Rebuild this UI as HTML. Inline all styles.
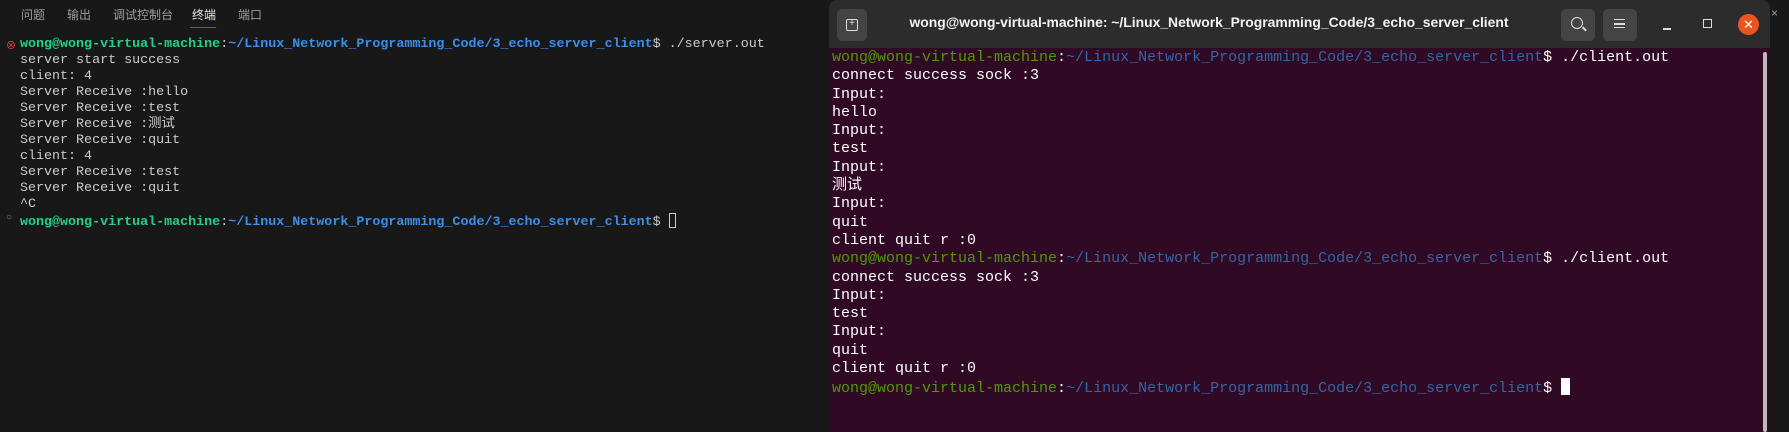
<!DOCTYPE html>
<html><head><meta charset="utf-8"><style>
*{margin:0;padding:0;box-sizing:border-box}
body{width:1789px;height:432px;background:#181818;position:relative;overflow:hidden;font-family:"Liberation Mono","Noto Sans CJK SC",monospace}
.tab{position:absolute;top:6px;font:12px "Liberation Sans","Noto Sans CJK SC",sans-serif;color:#9d9d9d}
.l{position:absolute;left:20px;font-size:13.35px;line-height:16px;color:#cccccc;white-space:pre}
.g{color:#23d18b;font-weight:bold}.b{color:#3b8eea;font-weight:bold}
.r{position:absolute;left:832px;font-size:15px;line-height:18.3px;color:#ffffff;white-space:pre}
.rg{color:#4e9a06}.rb{color:#3465a4}
.btn{position:absolute;top:9px;width:34px;height:32px;background:#444;border-radius:5px}
</style></head><body>
<div class="tab" style="left:21px">问题</div>
<div class="tab" style="left:67px">输出</div>
<div class="tab" style="left:113px">调试控制台</div>
<div class="tab" style="left:192px;color:#e7e7e7">终端</div>
<div style="position:absolute;left:190px;top:27px;width:26px;height:1px;background:#0078d4"></div>
<div class="tab" style="left:238px">端口</div>
<div style="position:absolute;left:6px;top:37px;color:#f14c4c;font-size:10px">⊗</div>
<div style="position:absolute;left:6px;top:213px;color:#888;font-size:10px">○</div>
<div class="l" style="top:37px"><span class="g">wong@wong-virtual-machine</span>:<span class="b">~/Linux_Network_Programming_Code/3_echo_server_client</span>$ ./server.out
server start success
client: 4
Server Receive :hello
Server Receive :test
Server Receive :测试
Server Receive :quit
client: 4
Server Receive :test
Server Receive :quit
^C
<span class="g">wong@wong-virtual-machine</span>:<span class="b">~/Linux_Network_Programming_Code/3_echo_server_client</span>$ <span style="display:inline-block;width:7px;height:15px;border:1px solid #ccc;vertical-align:-3px"></span></div>

<div style="position:absolute;left:829px;top:0;width:941px;height:432px;background:#300a24;border-radius:8px 8px 0 0;overflow:hidden">
<div style="position:absolute;left:0;top:0;width:941px;height:48px;background:#2c2c2c"></div>
<div class="btn" style="left:8px;width:30px"></div>
<div style="position:absolute;left:17px;top:19px;width:12px;height:12px;border:1px solid #ddd;border-radius:2px;color:#ddd;font-size:10px;line-height:10px;text-align:center">+</div>
<div style="position:absolute;left:55px;width:650px;top:14px;text-align:center;font:bold 13.9px 'Liberation Sans',sans-serif;color:#f2f2f2;white-space:nowrap">wong@wong-virtual-machine: ~/Linux_Network_Programming_Code/3_echo_server_client</div>
<div class="btn" style="left:732px"></div>
<div style="position:absolute;left:742px;top:17px;width:12px;height:12px;border:1.5px solid #ddd;border-radius:50%"></div>
<div style="position:absolute;left:753px;top:28px;width:5px;height:1.5px;background:#ddd;transform:rotate(45deg)"></div>
<div class="btn" style="left:774px"></div>
<div style="position:absolute;left:785px;top:19px;width:11px;height:9px;border-top:1.5px solid #ddd;border-bottom:1.5px solid #ddd"></div>
<div style="position:absolute;left:785px;top:23px;width:11px;height:1.5px;background:#ddd"></div>
<div style="position:absolute;left:834px;top:28px;width:8px;height:1.5px;background:#ddd"></div>
<div style="position:absolute;left:874px;top:19px;width:9px;height:9px;border:1.5px solid #ddd"></div>
<div style="position:absolute;left:909px;top:14px;width:21px;height:21px;border-radius:50%;background:#e95420;color:#fff;font:13px 'Liberation Sans',sans-serif;line-height:21px;text-align:center">✕</div>
<div style="position:absolute;left:934px;top:52px;width:4px;height:380px;background:#bbb;border-radius:2px"></div>
</div>
<div style="position:absolute;left:1771px;top:6px;color:#999;font:12px 'Liberation Sans',sans-serif">×</div>

<div class="r" style="top:49px"><span class="rg">wong@wong-virtual-machine</span>:<span class="rb">~/Linux_Network_Programming_Code/3_echo_server_client</span>$ ./client.out
connect success sock :3
Input:
hello
Input:
test
Input:
测试
Input:
quit
client quit r :0
<span class="rg">wong@wong-virtual-machine</span>:<span class="rb">~/Linux_Network_Programming_Code/3_echo_server_client</span>$ ./client.out
connect success sock :3
Input:
test
Input:
quit
client quit r :0
<span class="rg">wong@wong-virtual-machine</span>:<span class="rb">~/Linux_Network_Programming_Code/3_echo_server_client</span>$ <span style="display:inline-block;width:9px;height:17px;background:#fff;vertical-align:-3px"></span></div>
</body></html>
